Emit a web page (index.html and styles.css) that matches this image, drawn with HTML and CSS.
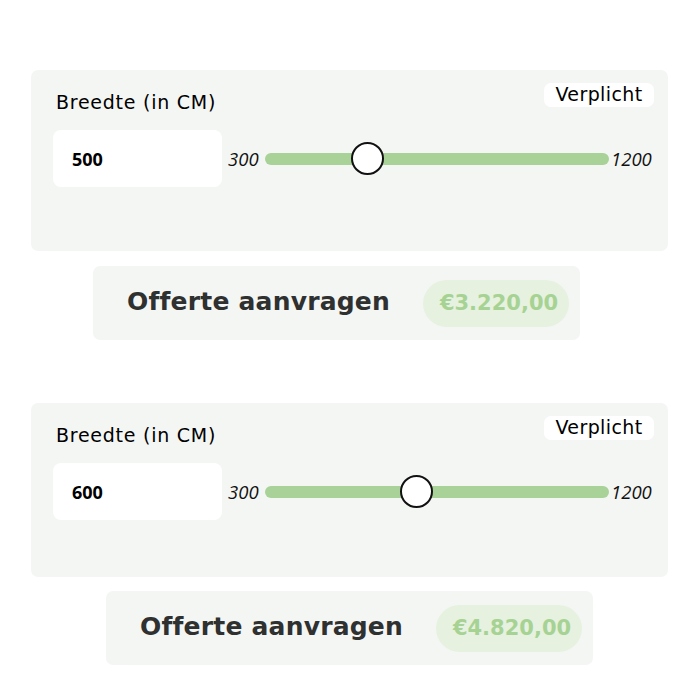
FILE: index.html
```html
<!DOCTYPE html>
<html lang="nl">
<head>
<meta charset="utf-8">
<title>Breedte</title>
<link rel="stylesheet" href="styles.css">
</head>
<body>
<div class="page">
  <section class="card card-first">
    <div class="card-head">
      <span class="label">Breedte (in CM)</span>
      <span class="badge">Verplicht</span>
    </div>
    <div class="control">
      <div class="input">500</div>
      <span class="bound bound-min">300</span>
      <div class="track">
        <span class="thumb" style="left: 29.9%"></span>
      </div>
      <span class="bound bound-max">1200</span>
    </div>
  </section>
  <div class="cta cta-first">
    <span class="cta-text">Offerte aanvragen</span>
    <span class="price">€3.220,00</span>
  </div>

  <section class="card card-second">
    <div class="card-head">
      <span class="label">Breedte (in CM)</span>
      <span class="badge">Verplicht</span>
    </div>
    <div class="control">
      <div class="input">600</div>
      <span class="bound bound-min">300</span>
      <div class="track">
        <span class="thumb" style="left: 43.9%"></span>
      </div>
      <span class="bound bound-max">1200</span>
    </div>
  </section>
  <div class="cta cta-second">
    <span class="cta-text">Offerte aanvragen</span>
    <span class="price">€4.820,00</span>
  </div>
</div>
</body>
</html>
```
FILE: styles.css
```css
* { box-sizing: border-box; }
html, body { margin: 0; padding: 0; background: #ffffff; }
body { font-family: "DejaVu Sans", "Open Sans", sans-serif; color: #000; }

.page {
  display: flex;
  flex-direction: column;
  padding-top: 70px;
}

.card {
  margin-left: 31px;
  width: 637px;
  background: #f4f6f4;
  border-radius: 7px;
  padding: 12px 14px 0 22px;
}
.card-first { height: 181px; }
.card-second { height: 174px; margin-top: 63px; }

.card-head {
  display: flex;
  justify-content: space-between;
  align-items: flex-start;
  height: 48px;
}
.label {
  margin-top: 8px;
  margin-left: 3px;
  font-size: 19px;
  line-height: 24px;
  font-weight: 400;
  letter-spacing: 0.75px;
}
.badge {
  background: #ffffff;
  border-radius: 7px;
  height: 24px;
  width: 110px;
  display: flex;
  align-items: flex-start;
  justify-content: center;
  font-size: 19px;
  line-height: 20px;
  font-weight: 400;
  letter-spacing: 0.4px;
  padding-top: 1px;
  margin-top: 1px;
}

.control {
  display: flex;
  align-items: center;
  height: 57px;
}
.input {
  width: 169px;
  height: 57px;
  background: #ffffff;
  border-radius: 8px;
  display: flex;
  align-items: center;
  padding-left: 19px;
  font-family: "Open Sans", sans-serif;
  font-weight: 700;
  font-size: 18px;
}
.bound {
  font-family: "Open Sans", sans-serif;
  font-style: italic;
  font-size: 18.5px;
  color: #111;
}
.bound-min { width: 43px; padding-left: 6px; }
.bound-max { margin-left: 2px; }

.track {
  position: relative;
  width: 344px;
  height: 12px;
  background: #a8d297;
  border-radius: 6px;
}
.thumb {
  position: absolute;
  top: 50%;
  width: 33px;
  height: 33px;
  margin-left: -16.5px;
  margin-top: -17px;
  background: #ffffff;
  border: 2px solid #111;
  border-radius: 50%;
}

.cta {
  width: 487px;
  height: 74px;
  background: #f4f6f4;
  border-radius: 7px;
  display: flex;
  align-items: center;
  justify-content: space-between;
  padding: 0 11px 0 34px;
}
.cta-first { margin-left: 93px; margin-top: 15px; }
.cta-second { margin-left: 106px; margin-top: 14px; }

.cta-text {
  font-size: 25px;
  font-weight: 700;
  color: #2f3030;
  letter-spacing: 0.2px;
  margin-top: -4px;
}
.price {
  height: 47px;
  width: 146px;
  border-radius: 24px;
  background: #e6f1e0;
  color: #a6d393;
  display: flex;
  align-items: center;
  justify-content: center;
  padding-left: 6px;
  font-size: 21px;
  font-weight: 700;
}
```
